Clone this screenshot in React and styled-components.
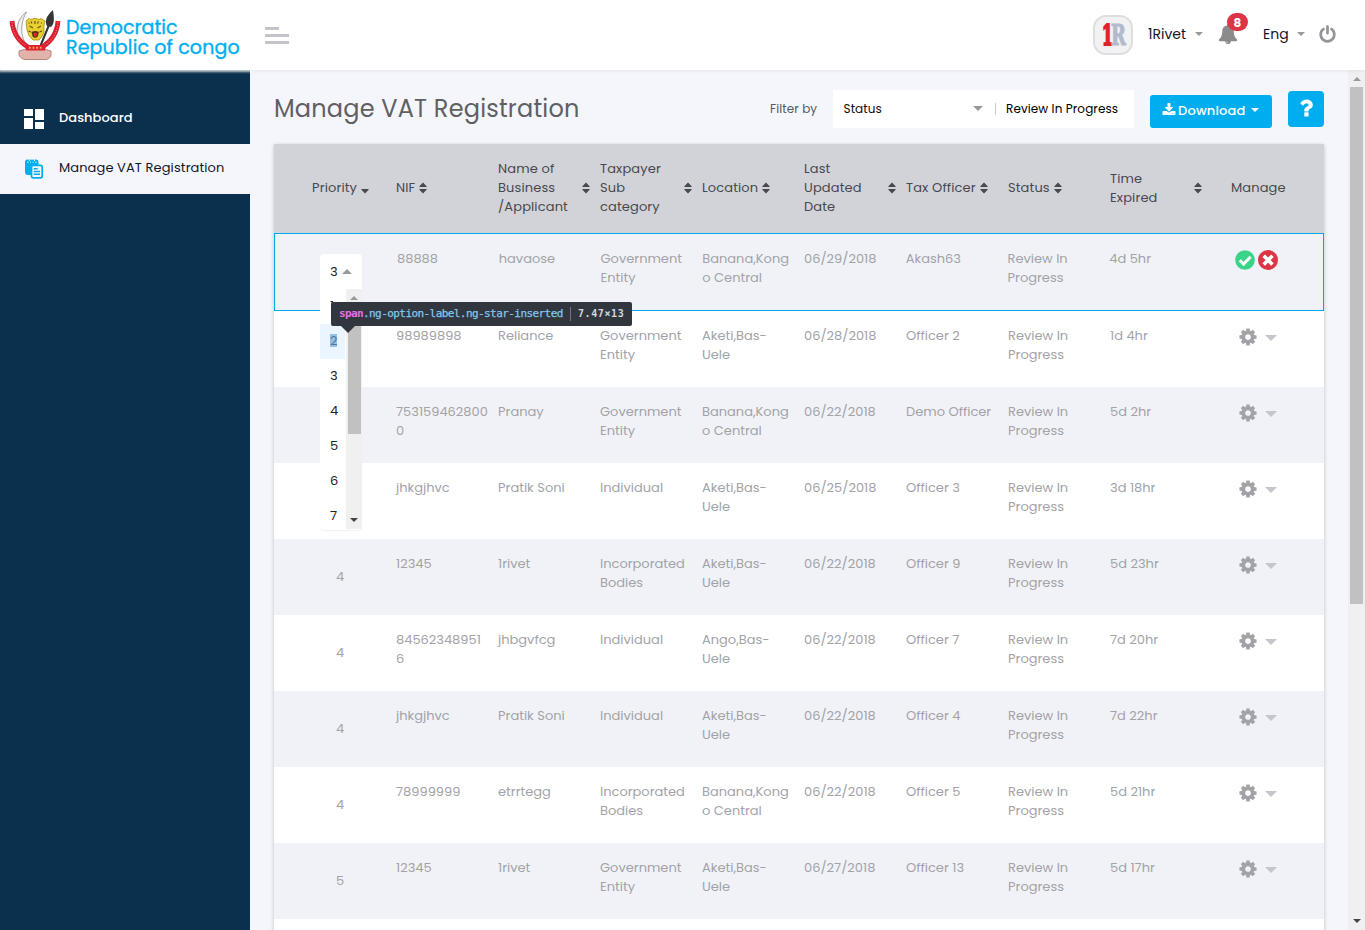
import React from "react";
import styled, { createGlobalStyle, css } from "styled-components";

const Global = createGlobalStyle`
  * { box-sizing: border-box; }
  html, body { margin: 0; padding: 0; overflow: hidden; }
  body {
    font-family: Poppins, Inter, "Liberation Sans", sans-serif;
    font-size: 13px;
    line-height: 19px;
    color: #212529;
    background: #f4f6fb;
  }
`;

const Shell = styled.div`
  display: grid;
  grid-template-columns: 250px 1fr;
  grid-template-rows: 70px 1fr;
  width: 1365px;
  height: 930px;
  overflow: hidden;
`;

const Brand = styled.div`
  position: relative;
  z-index: 2;
  display: flex;
  align-items: flex-start;
  padding: 8px 0 0 9px;
  background: #fff;
  box-shadow: 0 1px 2px 1px rgba(255, 255, 255, 0.75);
`;

const BrandText = styled.div`
  margin: 10px 0 0 5px;
  color: #00aeef;
  font-size: 19px;
  line-height: 20px;
  font-weight: 400;
  -webkit-text-stroke: 0.35px currentColor;
  white-space: nowrap;
`;
const BrandLine = styled.div`
  letter-spacing: ${(p) => p.$ls || 0}px;
`;

const TopBar = styled.header`
  position: relative;
  z-index: 1;
  display: flex;
  align-items: center;
  justify-content: space-between;
  padding: 0 28px 0 15px;
  background: #fff;
  box-shadow: 0 0 4px rgba(0, 0, 0, 0.1);
`;

const Burger = styled.button`
  display: flex;
  flex-direction: column;
  gap: 4px;
  width: 24px;
  padding: 0;
  border: 0;
  background: none;
`;
const BurgerLine = styled.span`
  height: 3px;
  width: ${(p) => p.$w}px;
  background: #c4c4cc;
`;

const Account = styled.div`
  display: flex;
  align-items: center;
  font-size: 14px;
  color: #14142b;
`;
const Avatar = styled.div`
  display: flex;
  align-items: center;
  justify-content: center;
  width: 40px;
  height: 40px;
  margin-right: 15px;
  border: 2px solid #dedede;
  border-radius: 13px;
  background: #f2f2f4;
`;
const AvatarMark = styled.div`
  display: grid;
  grid-template-columns: 9px 14px;
  font: 700 27px/27px "DejaVu Serif", serif;
  -webkit-text-stroke: 2px currentColor;
`;
const MarkOne = styled.span`
  color: #e02228;
  transform: scaleX(0.58);
  transform-origin: left;
`;
const MarkR = styled.span`
  color: #b4b9cb;
  -webkit-text-stroke-width: 1.2px;
  transform: scaleX(0.66);
  transform-origin: left;
`;
const AccountLabel = styled.span`
  width: ${(p) => p.$w}px;
  white-space: nowrap;
  margin-top: -2px;
`;
const Caret = styled.span`
  display: block;
  flex: none;
  width: 0;
  height: 0;
  border: ${(p) => p.$s || 4}px solid transparent;
  border-top-color: ${(p) => p.$c || "#999"};
  border-bottom-width: 0;
  margin-top: ${(p) => p.$mt || 0}px;
  ${(p) =>
    p.$up &&
    css`
      border-top-width: 0;
      border-bottom: ${p.$s || 4}px solid ${p.$c || "#999"};
    `}
`;
const BellWrap = styled.div`
  position: relative;
  display: flex;
  margin: -2px 25px 0 15px;
`;
const Badge = styled.span`
  position: absolute;
  left: 9px;
  top: -11px;
  width: 21px;
  height: 18px;
  border-radius: 9px;
  background: #dc3545;
  color: #fff;
  font-size: 12px;
  font-weight: 700;
  line-height: 19px;
  text-align: center;
`;
const PowerButton = styled.span`
  display: flex;
  margin: -2px 0 0 13px;
`;

const Sidebar = styled.nav`
  padding-top: 24px;
  background: #0b304e;
`;
const NavItem = styled.a`
  display: flex;
  align-items: center;
  height: 50px;
  padding-left: 24px;
  font-size: 13px;
  font-weight: ${(p) => (p.$active ? 400 : 500)};
  letter-spacing: ${(p) => p.$ls}px;
  color: ${(p) => (p.$active ? "#14142b" : "#fff")};
  background: ${(p) => (p.$active ? "#f4f6fb" : "transparent")};
`;
const NavIcon = styled.span`
  display: flex;
  width: 35px;
  margin-top: -1px;
`;
const NavText = styled.span`
  margin-top: -3px;
`;

const Body = styled.div`
  display: grid;
  grid-template-columns: 1fr 17px;
  min-height: 0;
`;
const Main = styled.main`
  padding: 20px 24px 0;
  overflow: hidden;
`;
const Toolbar = styled.div`
  display: flex;
  align-items: flex-start;
  height: 54px;
`;
const Title = styled.h1`
  flex: 1;
  margin: 0;
  padding-top: 3px;
  font-size: 24px;
  font-weight: 400;
  line-height: 31px;
  letter-spacing: 0.19px;
  color: #606062;
`;
const FilterLabel = styled.span`
  width: 63px;
  padding-top: 9px;
  font-size: 12px;
  letter-spacing: 0.1px;
  color: #58595b;
  white-space: nowrap;
`;
const FilterBox = styled.div`
  display: flex;
  align-items: center;
  width: 301px;
  height: 38px;
  padding: 0 10px;
  background: #fff;
  font-size: 12px;
  letter-spacing: 0.1px;
  color: #111;
`;
const FilterStatus = styled.span`
  flex: 1;
  padding-left: 0.5px;
  margin-top: -2px;
`;
const FilterDivider = styled.span`
  width: 1px;
  height: 12px;
  margin: 0 10px 0 12px;
  background: #c8c8c8;
`;
const FilterValue = styled.span`
  width: 118px;
  margin-top: -2px;
  white-space: nowrap;
  color: #000;
`;
const DownloadButton = styled.button`
  display: flex;
  align-items: center;
  width: 122px;
  height: 33px;
  margin: 5px 0 0 16px;
  padding: 0 13px 0 12px;
  border: 0;
  border-radius: 3px;
  background: #00aeef;
  color: #fff;
  font: inherit;
  font-size: 13px;
  font-weight: 500;
  letter-spacing: 0.2px;
  & > svg { margin-top: -3px; }
`;
const DownloadText = styled.span`
  flex: 1;
  padding-left: 2px;
  padding-bottom: 2px;
  text-align: left;
`;
const HelpButton = styled.button`
  display: flex;
  align-items: center;
  justify-content: center;
  width: 36px;
  height: 36px;
  margin: 1px 0 0 16px;
  padding: 0 0 3px;
  border: 0;
  border-radius: 4px;
  background: #00aeef;
`;

const Table = styled.div`
  position: relative;
  width: 1050px;
  box-shadow: 0 1px 4px rgba(0, 0, 0, 0.22);
`;
const columns = css`
  display: grid;
  grid-template-columns: 112px repeat(8, ${(p) => (p.$selected ? 101.75 : 102)}px) 1fr;
`;
const HeadRow = styled.div`
  ${columns}
  align-items: center;
  height: 89px;
  padding-bottom: 2px;
  background: #d2d3d8;
  color: #47494e;
`;
const HeadCell = styled.div`
  display: flex;
  align-items: center;
  gap: 4px;
  padding-left: ${(p) => p.$pad || 10}px;
  justify-content: ${(p) => (p.$spread ? "space-between" : "flex-start")};
  white-space: pre;
  & > svg { flex: none; }
`;
const HeadText = styled.span`
  letter-spacing: 0.13px;
`;
const Row = styled.div`
  ${columns}
  height: ${(p) => (p.$selected ? 78 : 76)}px;
  background: ${(p) => (p.$odd ? "#f1f2f7" : "#fff")};
  color: #a2a3a8;
  ${(p) => p.$selected && css`border: 1px solid #00a9ec;`}
`;
const Cell = styled.div`
  padding: 15px 0 0 10px;
  white-space: pre;
`;
const PriorityCell = styled.div`
  padding: 28px 0 0 20px;
  width: 112px;
  text-align: center;
`;
const ManageCell = styled.div`
  display: flex;
  align-items: flex-start;
  gap: ${(p) => p.$gap}px;
  padding: ${(p) => p.$top}px 0 0 ${(p) => p.$left}px;
`;
const GearCaret = styled.span`
  padding-top: 8px;
`;

const Dropdown = styled.div`
  position: absolute;
  z-index: 3;
  left: 46px;
  top: 110px;
  width: 42px;
  height: 276px;
  border-radius: 4px;
  background: #fff;
  box-shadow: 0 1px 1px rgba(0, 0, 0, 0.06);
  color: #222;
  overflow: hidden;
`;
const SelectedValue = styled.div`
  display: flex;
  align-items: center;
  gap: 4px;
  height: 35px;
  padding-left: 10px;
`;
const OptionArea = styled.div`
  display: grid;
  grid-template-columns: 26px 16px;
  grid-template-rows: 240px;
  height: 240px;
`;
const Option = styled.div`
  display: flex;
  align-items: center;
  width: 25px;
  height: 35px;
  padding: 0 0 3px 10px;
  background: ${(p) => (p.$marked ? "#ebf5ff" : "#fff")};
`;
const OptionLabel = styled.span`
  height: 13px;
  line-height: 13px;
  background: ${(p) => (p.$marked ? "#95bfe7" : "none")};
  color: ${(p) => (p.$marked ? "#55779b" : "#222")};
`;
const Track = styled.div`
  display: flex;
  flex-direction: column;
  align-items: center;
  justify-content: space-between;
  padding: ${(p) => p.$pad};
  background: #f0f0f0;
`;
const Thumb = styled.div`
  flex: none;
  width: 13px;
  height: ${(p) => p.$h}px;
  margin-top: ${(p) => p.$mt}px;
  margin-bottom: auto;
  background: #c1c1c1;
`;

const Tooltip = styled.div`
  position: absolute;
  z-index: 4;
  left: 57px;
  top: 158px;
  display: flex;
  align-items: center;
  width: 301px;
  height: 24px;
  padding: 0 8px;
  border-radius: 2px;
  background: #32363f;
  color: #d6d8db;
  font: 700 11px/14px "DejaVu Sans Mono", monospace;
  white-space: pre;
  &::after {
    content: "";
    position: absolute;
    left: 9px;
    top: 23px;
    border: 8px solid transparent;
    border-top-color: #32363f;
    border-bottom-width: 0;
  }
`;
const TipTag = styled.span`
  color: #e670e0;
  letter-spacing: -0.62px;
`;
const TipClass = styled.span`
  flex: 1;
  color: #82c6ee;
  font-weight: 400;
  letter-spacing: -0.57px;
  -webkit-text-stroke: 0.25px currentColor;
`;
const TipSize = styled.span`
  width: 54px;
  padding-left: 7px;
  border-left: 1px solid #73767c;
  letter-spacing: 0.6px;
  font-size: 10px;
`;

const paths = {
  cog: "M1152 896q0-106-75-181t-181-75-181 75-75 181 75 181 181 75 181-75 75-181zm512-109v222q0 12-8 23t-20 13l-185 28q-19 54-39 91 35 50 107 138 10 12 10 25t-9 23q-27 37-99 108t-94 71q-12 0-26-9l-138-108q-44 23-91 38-16 136-29 186-7 28-36 28h-222q-14 0-24.5-8.5t-11.5-21.5l-28-184q-49-16-90-37l-141 107q-10 9-25 9-14 0-25-11-126-114-165-168-7-10-7-23 0-12 8-23 15-21 51-66.5t54-70.5q-27-50-41-99l-183-27q-13-2-21-12.5t-8-23.5v-222q0-12 8-23t19-13l186-28q14-46 39-92-40-57-107-138-10-12-10-24 0-10 9-23 26-36 98.5-107.5t94.5-71.5q13 0 26 10l138 107q44-23 91-38 16-136 29-186 7-28 36-28h222q14 0 24.5 8.5t11.5 21.5l28 184q49 16 90 37l142-107q9-9 24-9 13 0 25 10 129 119 165 170 7 8 7 22 0 12-8 23-15 21-51 66.5t-54 70.5q26 50 41 98l183 28q13 2 21 12.5t8 23.5z",
  download:
    "M1344 1344q0-26-19-45t-45-19-45 19-19 45 19 45 45 19 45-19 19-45zm256 0q0-26-19-45t-45-19-45 19-19 45 19 45 45 19 45-19 19-45zm128-224v320q0 40-28 68t-68 28h-1472q-40 0-68-28t-28-68v-320q0-40 28-68t68-28h465l135 136q58 56 136 56t136-56l136-136h464q40 0 68 28t28 68zm-325-569q17 41-14 70l-448 448q-18 19-45 19t-45-19l-448-448q-31-29-14-70 17-39 59-39h256v-448q0-26 19-45t45-19h256q26 0 45 19t19 45v448h256q42 0 59 39z",
  power:
    "M1664 896q0 156-61 298t-164 245-245 164-298 61-298-61-245-164-164-245-61-298q0-182 80.5-343t226.5-270q43-32 95.5-25t83.5 50q32 42 24.5 94.5t-49.5 84.5q-98 74-151.5 181t-53.5 228q0 104 40.5 198.5t109.5 163.5 163.5 109.5 198.5 40.5 198.5-40.5 163.5-109.5 109.5-163.5 40.5-198.5q0-121-53.5-228t-151.5-181q-42-32-49.5-84.5t24.5-94.5q31-43 84-50t95 25q146 109 226.5 270t80.5 343zm-640-768v640q0 52-38 90t-90 38-90-38-38-90v-640q0-52 38-90t90-38 90 38 38 90z",
  bell: "M912 1696q0-16-16-16-59 0-101.5-42.5t-42.5-101.5q0-16-16-16t-16 16q0 73 51.5 124.5t124.5 51.5q16 0 16-16zm816-288q0 52-38 90t-90 38h-448q0 106-75 181t-181 75-181-75-75-181h-448q-52 0-90-38t-38-90q50-42 91-88t85-119.5 74.5-158.5 50-206 19.5-260q0-152 117-282.5t307-158.5q-8-19-8-39 0-40 28-68t68-28 68 28 28 68q0 20-8 39 190 28 307 158.5t117 282.5q0 139 19.5 260t50 206 74.5 158.5 85 119.5 91 88z",
  question:
    "M1088 1256v240q0 16-12 28t-28 12h-240q-16 0-28-12t-12-28v-240q0-16 12-28t28-12h240q16 0 28 12t12 28zm316-600q0 54-15.5 101t-35 76.5-55 59.5-57.5 43.5-61 35.5q-41 23-68.5 65t-27.5 67q0 17-12 32.5t-28 15.5h-240q-15 0-25.5-18.5t-10.5-37.5v-45q0-83 65-156.5t143-108.5q59-27 84-56t25-76q0-42-46.5-74t-107.5-32q-65 0-108 29-35 25-107 115-13 16-31 16-12 0-25-8l-164-125q-13-10-15.5-25t5.5-28q160-266 464-266 80 0 161 31t146 83 106 127.5 41 158.5z",
};

const Glyph = ({ name, size, color }) => (
  <svg width={size} height={size} viewBox="0 0 1792 1792" fill={color}>
    <path d={paths[name]} />
  </svg>
);

const SortIcon = ({ down }) => (
  <svg width="8" height="12" viewBox="0 0 8 12" fill="#47494e">
    {!down && <path d="M4 0.6 7.6 4.2Q8 5 7.2 5H.8Q0 5 .4 4.2Z" />}
    <path d="M4 11.4 7.6 7.8Q8 7 7.2 7H.8Q0 7 .4 7.8Z" />
  </svg>
);

const CheckIcon = () => (
  <svg width="20" height="20" viewBox="0 0 20 20">
    <circle cx="10" cy="10" r="9.8" fill="#3bd388" />
    <path d="M4.8 10.2 8.6 14 15.6 6.8" fill="none" stroke="#fff" strokeWidth="3" />
  </svg>
);
const CrossIcon = () => (
  <svg width="20" height="20" viewBox="0 0 20 20">
    <circle cx="10" cy="10" r="10" fill="#dc3545" />
    <path d="M7 7 13.2 13.2M13.2 7 7 13.2" fill="none" stroke="#fff" strokeWidth="3.6" strokeLinecap="square" />
  </svg>
);

const DashboardIcon = () => (
  <svg width="20" height="20" viewBox="0 0 20 20" fill="#fff">
    <path d="M0 0h9v7H0zM11 0h9v11h-9zM0 9h9v11H0zM11 13h9v7h-9z" />
  </svg>
);
const DocumentsIcon = () => (
  <svg width="20" height="21" viewBox="0 0 20 21">
    <path d="M3.5 1.5h8.5a2.5 2.5 0 0 1 2.5 2.5v4H9v9H4a3 3 0 0 1-3-3V4a2.5 2.5 0 0 1 2.5-2.5Z" fill="#00aeef" />
    <path d="M3 4.3h1.6M6 4.3h1M8.7 4.3h1M11.2 4.3h1.6M5.3 1v2M8 0.6v1.6M10.5 1v2" stroke="#f4f6fb" strokeWidth="0.9" />
    <rect x="7.5" y="7.3" width="10.7" height="12.6" rx="1.8" fill="#f4f6fb" stroke="#00aeef" strokeWidth="1.7" />
    <path d="M9.7 10.7h4M9.7 13.5h6.3M9.7 16.3h6.3" stroke="#00aeef" strokeWidth="1.5" />
  </svg>
);

const Emblem = () => (
  <svg width="52" height="53" viewBox="0 0 52 53">
    <path d="M17.5 4C7 11 6 26 11 32q3 5 8 7C12 31 10 17 17.5 4Z" fill="#f1f1f1" stroke="#8d8d8d" strokeWidth="0.8" />
    <path d="M31 39 40 17" stroke="#333" strokeWidth="2" />
    <path d="M44 2C36 9 36 14 38 18l4 1c4-4 3-9 2-17Z" fill="#363636" />
    <path d="M17 13l3-2.5 2 1q4-2.5 8 0l2-1 4 2.5-1 4 0 7q-2 6-5 8l-6 0q-5-4-6-10Z" fill="#e8d12f" stroke="#a78b20" strokeWidth="0.8" />
    <path d="M20.5 18l3.5 2M32 18l-3.5 2M22 13.5l1 2M29.5 13.5l-1 2M26 13v3M19.5 23l2.5 1M33 23l-2.5 1M20 14.5v1M32.5 14.5v1" stroke="#665415" strokeWidth="1.2" />
    <path d="M22.5 24q3.7-2 7.4 0l-1.2 4.5q-2.5 2.5-5 0Z" fill="#59370e" />
    <path d="M24.5 25h3.6l-.8 3.5h-2Z" fill="#e52a2a" />
    <path d="M3 13C4 25 9 33 19 39M49 13C48 25 43 33 33 39" fill="none" stroke="#d91c36" strokeWidth="4.8" />
    <path d="M3 14C4 26 9 33 19 39M49 14C48 26 43 33 33 39" fill="none" stroke="#f08b42" strokeWidth="1.1" strokeDasharray="1.2 1.5" />
    <path d="M10 43q6-3 16-2 10-1 16 2v4q-1 4.5-6 4.5H17q-5 0-7-4.5Z" fill="#e1b3aa" stroke="#b48680" />
    <path d="M16 37h21l-1 5.5H17Z" fill="#e01e36" />
    <path d="M20 39.8h13.5" stroke="#f3b04a" strokeWidth="2" strokeDasharray="1.8 1.8" />
  </svg>
);

const headers = [
  { text: "Priority", pad: 38, down: true },
  { text: "NIF" },
  { text: "Name of\nBusiness\n/Applicant", spread: true },
  { text: "Taxpayer\nSub\ncategory", spread: true },
  { text: "Location" },
  { text: "Last\nUpdated\nDate", spread: true },
  { text: "Tax Officer" },
  { text: "Status" },
  { text: "Time\nExpired", spread: true },
  { text: "Manage", pad: 29, plain: true },
];

const GOV = "Government\nEntity";
const INC = "Incorporated\nBodies";
const BANANA = "Banana,Kong\no Central";
const AKETI = "Aketi,Bas-\nUele";
const REVIEW = "Review In\nProgress";

const rows = [
  ["", "88888", "havaose", GOV, BANANA, "06/29/2018", "Akash63", REVIEW, "4d 5hr"],
  ["", "98989898", "Reliance", GOV, AKETI, "06/28/2018", "Officer 2", REVIEW, "1d 4hr"],
  ["", "753159462800\n0", "Pranay", GOV, BANANA, "06/22/2018", "Demo Officer", REVIEW, "5d 2hr"],
  ["", "jhkgjhvc", "Pratik Soni", "Individual", AKETI, "06/25/2018", "Officer 3", REVIEW, "3d 18hr"],
  ["4", "12345", "1rivet", INC, AKETI, "06/22/2018", "Officer 9", REVIEW, "5d 23hr"],
  ["4", "84562348951\n6", "jhbgvfcg", "Individual", "Ango,Bas-\nUele", "06/22/2018", "Officer 7", REVIEW, "7d 20hr"],
  ["4", "jhkgjhvc", "Pratik Soni", "Individual", AKETI, "06/22/2018", "Officer 4", REVIEW, "7d 22hr"],
  ["4", "78999999", "etrrtegg", INC, BANANA, "06/22/2018", "Officer 5", REVIEW, "5d 21hr"],
  ["5", "12345", "1rivet", GOV, AKETI, "06/27/2018", "Officer 13", REVIEW, "5d 17hr"],
  ["", "", "", "", "", "", "", "", ""],
];

export default function App() {
  return (
    <>
      <Global />
      <Shell>
        <Brand>
          <Emblem />
          <BrandText>
            <BrandLine>Democratic</BrandLine>
            <BrandLine $ls={0.13}>Republic of congo</BrandLine>
          </BrandText>
        </Brand>
        <TopBar>
          <Burger>
            <BurgerLine $w={14} />
            <BurgerLine $w={24} />
            <BurgerLine $w={24} />
          </Burger>
          <Account>
            <Avatar>
              <AvatarMark>
                <MarkOne>1</MarkOne>
                <MarkR>R</MarkR>
              </AvatarMark>
            </Avatar>
            <AccountLabel $w={47}>1Rivet</AccountLabel>
            <Caret $mt={-3} />
            <BellWrap>
              <Glyph name="bell" size={20} color="#8b8b8b" />
              <Badge>8</Badge>
            </BellWrap>
            <AccountLabel $w={34}>Eng</AccountLabel>
            <Caret $mt={-3} />
            <PowerButton>
              <Glyph name="power" size={19} color="#93949a" />
            </PowerButton>
          </Account>
        </TopBar>
        <Sidebar>
          <NavItem $ls={0.05}>
            <NavIcon><DashboardIcon /></NavIcon>
            <NavText>Dashboard</NavText>
          </NavItem>
          <NavItem $active $ls={0.1}>
            <NavIcon><DocumentsIcon /></NavIcon>
            <NavText>Manage VAT Registration</NavText>
          </NavItem>
        </Sidebar>
        <Body>
          <Main>
            <Toolbar>
              <Title>Manage VAT Registration</Title>
              <FilterLabel>Filter by</FilterLabel>
              <FilterBox>
                <FilterStatus>Status</FilterStatus>
                <Caret $s={5} $mt={-1} />
                <FilterDivider />
                <FilterValue>Review In Progress</FilterValue>
              </FilterBox>
              <DownloadButton>
                <Glyph name="download" size={14} color="#fff" />
                <DownloadText>Download</DownloadText>
                <Caret $c="#fff" $mt={-3} />
              </DownloadButton>
              <HelpButton>
                <Glyph name="question" size={24} color="#fff" />
              </HelpButton>
            </Toolbar>
            <Table>
              <HeadRow>
                {headers.map((h) => (
                  <HeadCell key={h.text} $pad={h.pad} $spread={h.spread}>
                    <HeadText>{h.text}</HeadText>
                    {!h.plain && <SortIcon down={h.down} />}
                  </HeadCell>
                ))}
              </HeadRow>
              {rows.map((row, i) => (
                <Row key={i} $odd={i % 2 === 0} $selected={i === 0}>
                  <PriorityCell>{row[0]}</PriorityCell>
                  {row.slice(1).map((text, c) => (
                    <Cell key={c}>{text}</Cell>
                  ))}
                  {i === 0 ? (
                    <ManageCell $gap={3} $top={16} $left={33.5}>
                      <CheckIcon />
                      <CrossIcon />
                    </ManageCell>
                  ) : (
                    <ManageCell $gap={7} $top={16} $left={36}>
                      <Glyph name="cog" size={20} color="#a2a3a8" />
                      <GearCaret><Caret $s={6} $c="#c5c6cb" /></GearCaret>
                    </ManageCell>
                  )}
                </Row>
              ))}
              <Dropdown>
                <SelectedValue>3<Caret $up $s={5} /></SelectedValue>
                <OptionArea>
                  <div>
                    {[1, 2, 3, 4, 5, 6, 7].map((n) => (
                      <Option key={n} $marked={n === 2}>
                        <OptionLabel $marked={n === 2}>{n}</OptionLabel>
                      </Option>
                    ))}
                  </div>
                  <Track $pad="7px 0 7px">
                    <Caret $up />
                    <Thumb $h={128} $mt={6} />
                    <Caret $c="#444" />
                  </Track>
                </OptionArea>
              </Dropdown>
              <Tooltip>
                <TipTag>span</TipTag>
                <TipClass>.ng-option-label.ng-star-inserted</TipClass>
                <TipSize>7.47×13</TipSize>
              </Tooltip>
            </Table>
          </Main>
          <Track $pad="7px 0 7px">
            <Caret $up />
            <Thumb $h={517} $mt={6} />
            <Caret $c="#444" />
          </Track>
        </Body>
      </Shell>
    </>
  );
}
